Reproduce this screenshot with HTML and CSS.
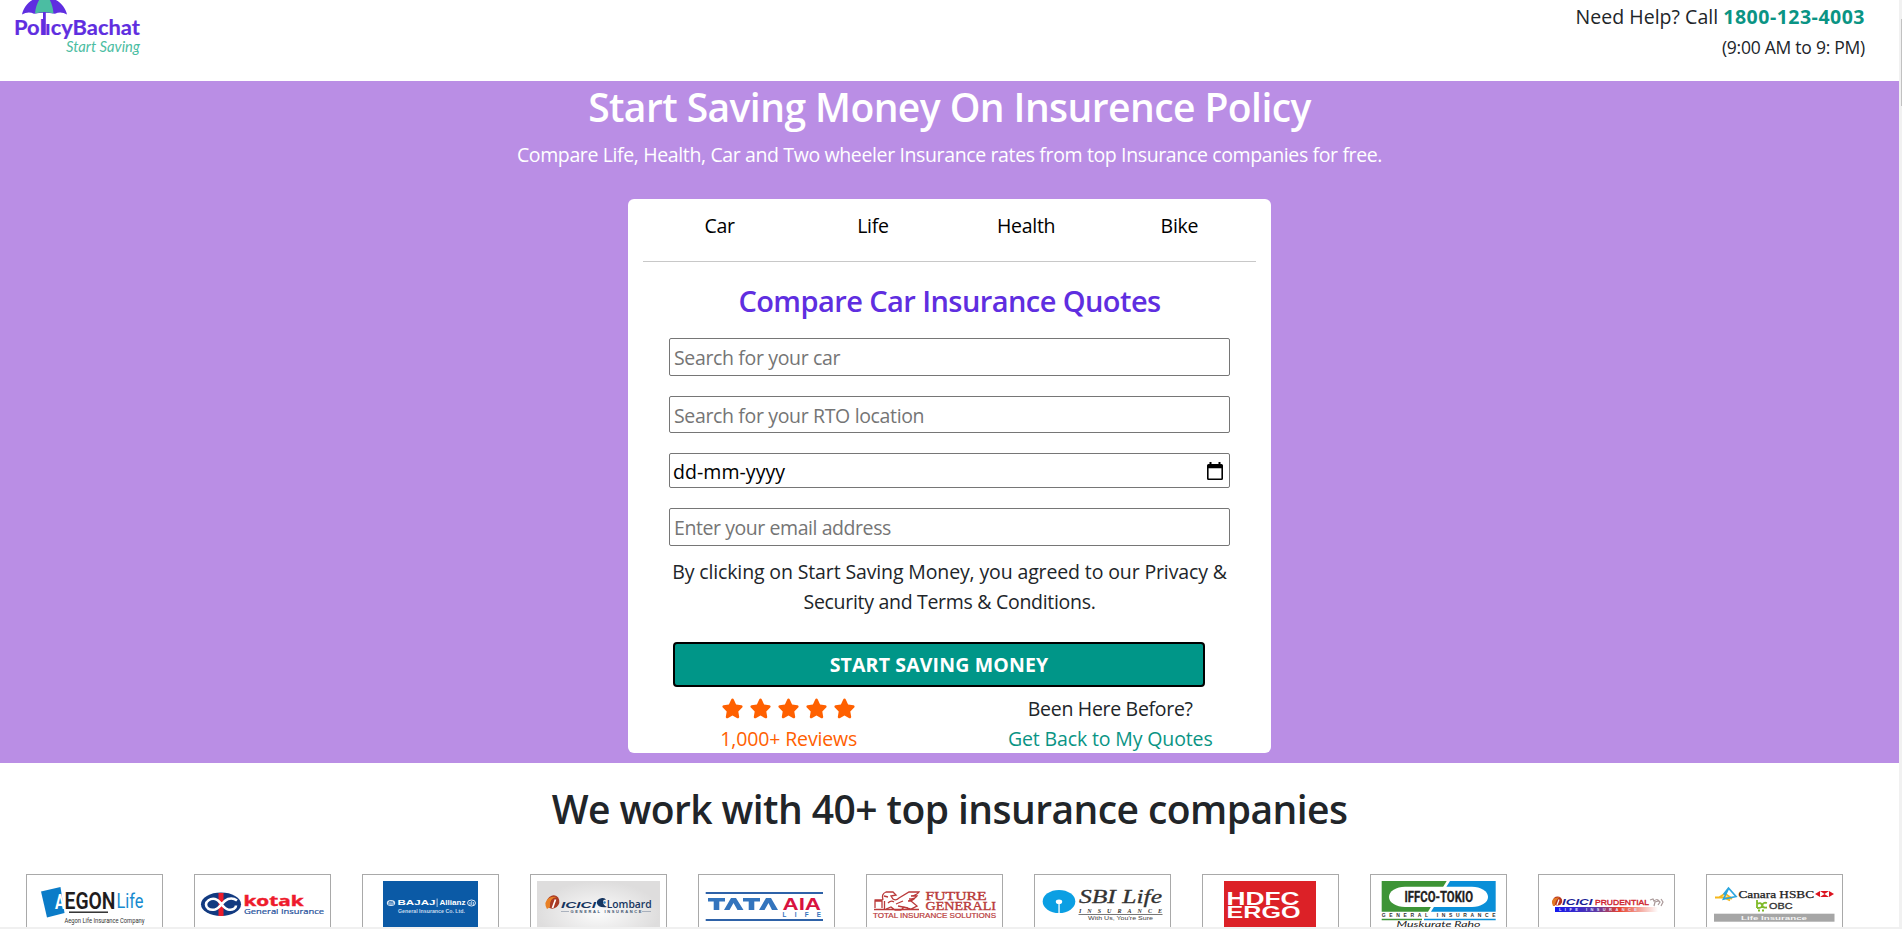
FILE: index.html
```
<!DOCTYPE html>
<html lang="en">
<head>
<meta charset="utf-8">
<title>PolicyBachat</title>
<link rel="stylesheet" href="styles.css">
</head>
<body>
<svg class="defs" aria-hidden="true">
  <defs>
    <path id="star" d="M10.5 .6c.6 0 1 .3 1.300.9l2.300 4.900 5.300.8c1.200.2 1.600 1.500.8 2.300l-3.900 3.900.9 5.400c.2 1.100-.9 1.900-1.900 1.400l-4.800-2.600-4.800 2.600c-1 .5-2.100-.3-1.900-1.400l.9-5.400L.8 9.500C0 8.700.4 7.400 1.600 7.200l5.300-.8 2.300-4.900c.3-.6.7-.9 1.300-.9z"/>
    <linearGradient id="pru" x1="0" x2="1"><stop offset="0" stop-color="#1418f0"/><stop offset=".4" stop-color="#5b3aa8"/><stop offset=".62" stop-color="#e8412c"/><stop offset="1" stop-color="#fff"/></linearGradient>
    <radialGradient id="silver"><stop offset="0" stop-color="#fbfbfb"/><stop offset="1" stop-color="#dedddd"/></radialGradient>
  </defs>
</svg>
<div class="window">
  <div class="page">
    <header class="header">
      <svg class="logo" width="150" height="60" viewBox="0 0 150 60">
        <path fill="#5f2ee0" d="M22 14.500C24 5 32-3 44-3s21 8 23 17.500q-6-3.500-12-.8-11-2-21 0-6-2.700-12 .8z"/>
        <path fill="#4bbda2" d="M35 13.500C35.500 7 38 1 41-3h7c3 4 5 10 5.500 16.500q-9-2.500-18.500 0z"/>
        <rect x="43" y="12" width="2.800" height="23" fill="#5f2ee0"/>
        <g class="lato" font-size="20.500" font-weight="700" fill="#5f2ee0" stroke="#5f2ee0" stroke-width=".2">
          <text x="14" y="35.200" textLength="126" lengthAdjust="spacingAndGlyphs">PolıcyBachat</text>
        </g>
        <text class="lato" x="66" y="52" font-size="15.500" font-style="italic" fill="#4bbda2" textLength="74" lengthAdjust="spacingAndGlyphs">Start Saving</text>
      </svg>
      <div class="help">
        <div class="call">Need Help? Call <b class="phone">1800-123-4003</b></div>
        <div class="hours">(9:00 AM to 9: PM)</div>
      </div>
    </header>

    <main class="hero">
      <h1 class="title">Start Saving Money On Insurence Policy</h1>
      <p class="subtitle">Compare Life, Health, Car and Two wheeler Insurance rates from top Insurance companies for free.</p>
      <section class="quote">
        <nav class="tabs"><a>Car</a><a>Life</a><a>Health</a><a>Bike</a></nav>
        <h2 class="quote-title">Compare Car Insurance Quotes</h2>
        <form class="form">
          <input class="field" placeholder="Search for your car">
          <input class="field rto" placeholder="Search for your RTO location">
          <div class="field date"><span>dd-mm-yyyy</span>
            <svg width="16" height="19" viewBox="0 0 16 19"><path d="M2.500 0h2v2h7V0h2v2h1Q16 2 16 3.500v13Q16 18 14.500 18h-13Q0 18 0 16.500v-13Q0 2 1.500 2h1zM1.600 6.200v10.200h12.800V6.200z" fill-rule="evenodd"/></svg>
          </div>
          <input class="field email" placeholder="Enter your email address">
        </form>
        <p class="terms">By clicking on Start Saving Money, you agreed to our Privacy &amp;<br><span class="tight">Security and Terms &amp; Conditions.</span></p>
        <button class="submit">START SAVING MONEY</button>
        <div class="foot">
          <div class="reviews">
            <div class="stars">
              <svg width="133" height="21" viewBox="0 0 133 21" fill="#ff6000"><use href="#star"/><use href="#star" x="28"/><use href="#star" x="56"/><use href="#star" x="84"/><use href="#star" x="112"/></svg>
            </div>
            <div>1,000+ Reviews</div>
          </div>
          <div class="back">
            <div class="tight">Been Here Before?</div>
            <div class="link">Get Back to My Quotes</div>
          </div>
        </div>
      </section>
    </main>

    <section class="partners">
      <h2 class="partners-title">We work with 40+ top insurance companies</h2>
      <div class="row">
        <svg class="partner" viewBox="1 1 135 70">
          <path fill="#0b7cc8" d="M15 17.500 34.500 13 38.500 39 21 43.500z"/>
          <text class="roboto" x="29" y="35.300" font-size="21" font-weight="700" fill="#fff" textLength="10" lengthAdjust="spacingAndGlyphs">A</text>
          <text class="roboto" x="38.500" y="35.300" font-size="23" font-weight="600" fill="#1f1c1d" textLength="51" lengthAdjust="spacingAndGlyphs">EGON</text>
          <text class="roboto" x="90.500" y="33.500" font-size="21" fill="#178bd0" textLength="27" lengthAdjust="spacingAndGlyphs">Life</text>
          <rect x="43" y="37.500" width="39" height="1.400" fill="#222"/>
          <text class="roboto" x="38.500" y="48.500" font-size="6.500" fill="#333" textLength="80" lengthAdjust="spacingAndGlyphs">Aegon Life Insurance Company</text>
        </svg>
        <svg class="partner" viewBox="1 1 135 70">
          <ellipse cx="27" cy="30.300" rx="20" ry="11.700" fill="#123a80"/>
          <rect x="24.500" y="19" width="5" height="23" fill="#ed1c2a"/>
          <path d="M43 26.500q-4-3-9-1.500c-6 2-7 9-13 10.500-6 1.300-9-2-9-5s4-6.500 9-5.500c6 1.500 7 9 13 10.500 5 1 8-1.500 8-4" fill="none" stroke="#fff" stroke-width="2.600"/>
          <text class="open" x="49.500" y="31.500" font-size="13.500" font-weight="700" fill="#ee1b2c" stroke="#ee1b2c" stroke-width=".4" textLength="60" lengthAdjust="spacingAndGlyphs">kotak</text>
          <text class="open" x="50" y="40" font-size="7.800" font-weight="500" fill="#24509a" stroke="#24509a" stroke-width=".2" textLength="80" lengthAdjust="spacingAndGlyphs">General Insurance</text>
        </svg>
        <svg class="partner" viewBox="1 1 135 70">
          <rect x="21" y="7" width="95" height="64" fill="#0b5aa6"/>
          <ellipse cx="29" cy="29" rx="4.200" ry="3" fill="#dbe8f5"/><path d="M27 31v-3q1-1 2 0v3m0-3q2-1 2 1v2" fill="none" stroke="#0b5aa6" stroke-width=".9"/>
          <text class="arial" x="35.500" y="31.400" font-size="7.200" font-weight="700" fill="#fff" textLength="38" lengthAdjust="spacingAndGlyphs">BAJAJ</text>
          <rect x="74.700" y="24.500" width=".8" height="8.500" fill="#dbe8f5"/>
          <text class="arial" x="77.500" y="31.400" font-size="7.400" font-weight="700" fill="#fff" textLength="26" lengthAdjust="spacingAndGlyphs">Allianz</text>
          <ellipse cx="109.500" cy="29" rx="4" ry="3" fill="none" stroke="#dbe8f5"/><path d="M108 31v-3m1.700 3v-4m1.700 4v-3" stroke="#dbe8f5" stroke-width=".8"/>
          <text class="arial" x="36" y="38.800" font-size="4.600" font-weight="700" fill="#c7daee" textLength="67" lengthAdjust="spacingAndGlyphs">General Insurance Co. Ltd.</text>
        </svg>
        <svg class="partner" viewBox="1 1 135 70">
          <rect x="7" y="7" width="123" height="64" fill="url(#silver)"/>
          <ellipse cx="23" cy="28" rx="6.200" ry="6.800" fill="#a93a25" transform="rotate(30 23 28)"/><path d="M17 35q-4-7 2-11 4-2 8-1-8 1-7 10z" fill="#e88025"/><path d="M22.500 34l3-8.500" stroke="#fff" stroke-width="1.700"/>
          <text class="arial" x="31" y="33.900" font-size="9" font-weight="700" font-style="italic" fill="#16355f" textLength="35" lengthAdjust="spacingAndGlyphs">ICICI</text>
          <path d="M76 26q-3-1-3 2t4 5q-9 1-10-3.500T72 24q3-.5 4 2z" fill="#16355f"/><circle cx="74.500" cy="28.500" r="1.300" fill="#2b7fc0"/>
          <text class="open" x="76.700" y="33.900" font-size="9.800" font-weight="600" fill="#16355f" textLength="45" lengthAdjust="spacingAndGlyphs">Lombard</text>
          <path d="M31 37.500h8m73 0h9" stroke="#8e9aab" stroke-width=".7"/>
          <text class="arial" x="40.500" y="39" font-size="4" font-weight="700" fill="#3d526e" textLength="71">GENERAL INSURANCE</text>
        </svg>
        <svg class="partner" viewBox="1 1 135 70">
          <path d="M7.700 19h117.300M7.700 46h117.300" stroke="#2e62a8" stroke-width="2"/>
          <path fill="#3374bd" d="M10 24h17v3.500h-5.700V36h-5.600v-8.500H10zM33 24h5l7.500 12h-6L35.500 29 31.500 36H26zM45 24h17v3.500h-5.700V36h-5.600v-8.500H45zM68 24h5l7 12h-6L70.500 29 66.500 36H61z"/>
          <text class="arial" x="84.500" y="36.200" font-size="17.300" font-weight="700" fill="#d8123f" textLength="38.500" lengthAdjust="spacingAndGlyphs">AIA</text>
          <text class="arial" x="84.500" y="42.800" font-size="6.300" font-weight="700" fill="#3374bd" textLength="38.500">LIFE</text>
        </svg>
        <svg class="partner" viewBox="1 1 135 70">
          <path d="M8 35.500h45M9 34V27h7v7m2.500 1V27m-10-1h8M17 26q-2-6 3-8h7l3 3-5 1 2 3q3 2 6-1l10-6h10q-2 3-8 4h6q-2 3-8 3h5q-2 2-6 2h3l6 5-6 3-7-2-3 3h-6l-4-3-5 2m2-6q3-3 6-1m2 2 7-3m-5 5 10 2m-24-12 4 1" fill="none" stroke="#ba3a3a" stroke-width="1.300"/>
          <text class="times" x="59.500" y="26" font-size="11.600" fill="#b93a3a" stroke="#b93a3a" stroke-width=".35" textLength="61" lengthAdjust="spacingAndGlyphs">FUTURE</text>
          <text class="times" x="59.500" y="35.600" font-size="12" fill="#b93a3a" stroke="#b93a3a" stroke-width=".35" textLength="70.500" lengthAdjust="spacingAndGlyphs">GENERALI</text>
          <text class="arial" x="7" y="43.600" font-size="6.800" fill="#b93a3a" stroke="#b93a3a" stroke-width=".2" textLength="123" lengthAdjust="spacingAndGlyphs">TOTAL INSURANCE SOLUTIONS</text>
        </svg>
        <svg class="partner" viewBox="1 1 135 70">
          <ellipse cx="25" cy="27.500" rx="16.300" ry="11.500" fill="#0b9fe3"/><ellipse cx="25" cy="27.700" rx="3.200" ry="2.300" fill="#fff"/><rect x="24.400" y="28" width="1.300" height="11" fill="#fff"/>
          <text class="times" x="45" y="29.300" font-size="18.500" font-style="italic" fill="#333" stroke="#333" stroke-width=".3" textLength="83" lengthAdjust="spacingAndGlyphs">SBI Life</text>
          <text class="times" x="45" y="39" font-size="6" font-weight="700" font-style="italic" fill="#333" textLength="83">INSURANCE</text>
          <rect x="44.500" y="40.200" width="84" height=".8" fill="#555"/>
          <text class="arial" x="54" y="46" font-size="5.200" fill="#444" textLength="65" lengthAdjust="spacingAndGlyphs">With Us, You're Sure</text>
        </svg>
        <svg class="partner" viewBox="1 1 135 70">
          <rect x="22" y="7" width="92" height="64" fill="#dc2127"/>
          <text class="arial" x="24.500" y="30.700" font-size="18" font-weight="700" fill="#fff" textLength="73" lengthAdjust="spacingAndGlyphs">HDFC</text>
          <text class="arial" x="24.500" y="44.400" font-size="16.500" font-weight="700" fill="#fff" textLength="74" lengthAdjust="spacingAndGlyphs">ERGO</text>
        </svg>
        <svg class="partner" viewBox="1 1 135 70">
          <path fill="#3d9436" d="M11.700 7h65L58 37.700H11.700z"/><path fill="#0a8fd8" d="M80 7h45.700v30.700H61z"/>
          <rect x="19" y="12.700" width="99" height="20.300" rx="16" ry="10.100" fill="#fff"/>
          <text class="roboto" x="34.500" y="28.200" font-size="15" font-weight="700" fill="#222" stroke="#222" stroke-width=".3" textLength="68.500" lengthAdjust="spacingAndGlyphs">IFFCO-TOKIO</text>
          <text class="arial" x="11.700" y="42.900" font-size="5" font-weight="700" fill="#333" textLength="114">GENERAL INSURANCE</text>
          <path d="M11.700 45.500H52" stroke="#3d9436" stroke-width="1.300"/><path d="M54 45.500h71.700" stroke="#0a8fd8" stroke-width="1.300"/>
          <text class="lato" x="26.500" y="52.600" font-size="7.500" font-style="italic" fill="#222" textLength="84" lengthAdjust="spacingAndGlyphs">Muskurate Raho</text>
        </svg>
        <svg class="partner" viewBox="1 1 135 70">
          <ellipse cx="19.500" cy="27" rx="4.700" ry="4.500" fill="#b5331f"/><path d="M15 32q-3-6 2-8l5-1q-5 3-5 9z" fill="#e27a24"/><path d="M19 31l2-5.500" stroke="#fff" stroke-width="1.200"/>
          <text class="arial" x="24" y="30.700" font-size="8.200" font-weight="700" font-style="italic" fill="#1b1e96" textLength="30.500" lengthAdjust="spacingAndGlyphs">ICICI</text>
          <text class="arial" x="57" y="30.700" font-size="8" fill="#cf2630" stroke="#cf2630" stroke-width=".4" textLength="54" lengthAdjust="spacingAndGlyphs">PRUDENTIAL</text>
          <path d="M112 26l3-1 1 2q4-3 4 0l-3 1-1 4m4-6 2 2-2 3m3-6 2 3-2 4" fill="none" stroke="#a99" stroke-width="1.200"/>
          <rect x="17" y="33" width="103" height="5" fill="url(#pru)"/>
          <text class="arial" x="21" y="37.200" font-size="4" font-weight="700" fill="#dfe0ff" textLength="78">LIFE INSURANCE</text>
        </svg>
        <svg class="partner" viewBox="1 1 135 70">
          <path d="M9 23.500h11l6 1-7-5-6 4m7 1 4 2" fill="none" stroke="#f5b81c" stroke-width="1.800"/><path d="M17.500 20.500 22.500 14l7.500 8.500-12.500 2.500 5-10.500" fill="none" stroke="#2aa5de" stroke-width="1.700"/>
          <text class="times" x="32.500" y="23.700" font-size="10" fill="#222" stroke="#222" stroke-width=".25" textLength="75.500" lengthAdjust="spacingAndGlyphs">Canara HSBC</text>
          <path fill="#dc1420" d="M109 20l5-3h9l5 3-5 3h-9z"/><path fill="#fff" d="M114 17l4.500 3-4.500 3zM123 17l-4.500 3 4.500 3z"/>
          <path d="M51 26v8m0-4q4-2 5 1t-5 3m10-5q-4-1-4.500 2t4.500 2.500m-9 3h2m2 0h2" fill="none" stroke="#7fba28" stroke-width="1.800"/>
          <text class="arial" x="63" y="34.800" font-size="8.200" fill="#333" stroke="#333" stroke-width=".3" textLength="23.500" lengthAdjust="spacingAndGlyphs">OBC</text>
          <rect x="8" y="39.700" width="120.500" height="8" fill="#a6a6a6"/>
          <text class="arial" x="35" y="46" font-size="6" font-weight="700" fill="#f4f4f4" textLength="66" lengthAdjust="spacingAndGlyphs">Life Insurance</text>
        </svg>
      </div>
    </section>
  </div>
  <div class="scroll"><div class="thumb"></div></div>
</div>
<div class="edge"></div>
</body>
</html>
```
FILE: styles.css
```
* { box-sizing: border-box; }
body {
  margin: 0;
  height: 929px;
  overflow: hidden;
  background: #fff;
  color: #212529;
  font: 19.5px/30px "Open Sans", "Noto Sans", sans-serif;
  letter-spacing: -.13px;
}
h1, h2, p { margin: 0; }
.defs { display: block; width: 0; height: 0; }
.window { display: flex; height: 927px; overflow: hidden; }
.page { flex: 1; }
.scroll { width: 3px; padding: 19px 0 0 2px; background: #f1f1f1; }
.thumb { height: 87px; background: #c1c1c1; }
.edge { height: 2px; background: #f0f0f0; }

.header { display: flex; justify-content: space-between; height: 81px; }
.logo { display: block; }
.help { padding: 2px 34px 0 0; text-align: right; white-space: nowrap; letter-spacing: .03px; }
.phone { color: #0a9484; letter-spacing: .5px; }
.hours { font-size: 17.5px; letter-spacing: -.25px; }

.hero {
  display: flex;
  flex-direction: column;
  align-items: center;
  height: 682px;
  background: #ba8ee5;
  color: #fff;
}
.title { margin-top: 2px; font-size: 39px; line-height: 48px; font-weight: 600; letter-spacing: -.56px; }
.subtitle { margin-top: 9px; letter-spacing: -.37px; }
.quote {
  width: 643px;
  height: 554px;
  margin-top: 29px;
  padding-top: 12px;
  border-radius: 6px;
  background: #fff;
  color: #212529;
}
.tabs {
  display: grid;
  grid-template-columns: repeat(4, 1fr);
  height: 51px;
  margin: 0 15px;
  border-bottom: 1px solid #c8c8c8;
  color: #000;
  text-align: center;
  letter-spacing: -.3px;
}
.quote-title {
  margin: 21px 0 19px;
  color: #5f2ee0;
  font-size: 29px;
  line-height: 36px;
  font-weight: 600;
  text-align: center;
  letter-spacing: -.57px;
}
.form { display: flex; flex-direction: column; gap: 20px; margin: 0 41px; }
.field {
  width: 100%;
  height: 38px;
  padding: 2px 3px 1px 4px;
  border: 1px solid #767676;
  border-radius: 2px;
  background: #fff;
  font: inherit;
  letter-spacing: -.35px;
}
.field::placeholder { color: #757575; opacity: 1; }
.rto { height: 37px; padding-top: 3px; }
.email { letter-spacing: -.43px; }
.date {
  display: flex;
  justify-content: space-between;
  align-items: center;
  height: 35px;
  padding: 2px 6px 0 3px;
  color: #000;
  letter-spacing: .05px;
}
.terms { margin-top: 11px; text-align: center; }
.tight { letter-spacing: -.3px; }
.submit {
  display: block;
  width: 532px;
  height: 45px;
  margin: 25px 0 7px 45px;
  padding: 1px 0 0;
  border: 2px solid #000;
  border-radius: 4px;
  background: #009688;
  color: #fff;
  font: inherit;
  font-weight: 700;
  letter-spacing: .15px;
}
.foot { display: grid; grid-template-columns: 1fr 1fr; text-align: center; }
.reviews { color: #ff6000; }
.stars { display: flex; justify-content: center; height: 30px; padding-top: 4px; }
.link { color: #0a9484; }

.partners { padding-top: 22px; }
.partners-title {
  font-size: 39px;
  line-height: 48px;
  font-weight: 600;
  text-align: center;
  letter-spacing: -.56px;
}
.row { display: flex; gap: 31px; margin: 41px 0 0 26px; }
.partner { flex: none; width: 137px; height: 72px; border: 1px solid #a9a9a9; letter-spacing: 0; }
.arial { font-family: "Liberation Sans", sans-serif; }
.times { font-family: "Liberation Serif", serif; }
.roboto { font-family: Roboto, sans-serif; }
.lato { font-family: Lato, sans-serif; letter-spacing: 0; }
.open { font-family: "Open Sans", sans-serif; }
```
